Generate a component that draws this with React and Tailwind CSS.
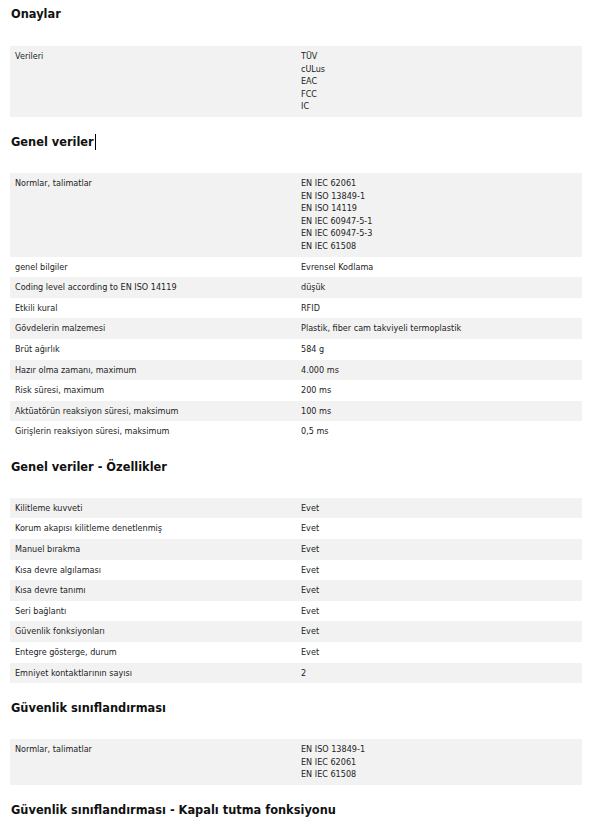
import React from 'react';

const sections = [
      {
            title: 'Onaylar',
            rows: [
                  ['Verileri', ['TÜV', 'cULus', 'EAC', 'FCC', 'IC']],
            ],
      },
      {
            title: 'Genel veriler',
            caret: true,
            rows: [
                  ['Normlar, talimatlar', ['EN IEC 62061', 'EN ISO 13849-1', 'EN ISO 14119', 'EN IEC 60947-5-1', 'EN IEC 60947-5-3', 'EN IEC 61508']],
                  ['genel bilgiler', ['Evrensel Kodlama']],
                  ['Coding level according to EN ISO 14119', ['düşük']],
                  ['Etkili kural', ['RFID']],
                  ['Gövdelerin malzemesi', ['Plastik, fiber cam takviyeli termoplastik']],
                  ['Brüt ağırlık', ['584 g']],
                  ['Hazır olma zamanı, maximum', ['4.000 ms']],
                  ['Risk süresi, maximum', ['200 ms']],
                  ['Aktüatörün reaksiyon süresi, maksimum', ['100 ms']],
                  ['Girişlerin reaksiyon süresi, maksimum', ['0,5 ms']],
            ],
      },
      {
            title: 'Genel veriler - Özellikler',
            rows: [
                  ['Kilitleme kuvveti', ['Evet']],
                  ['Korum akapısı kilitleme denetlenmiş', ['Evet']],
                  ['Manuel bırakma', ['Evet']],
                  ['Kısa devre algılaması', ['Evet']],
                  ['Kısa devre tanımı', ['Evet']],
                  ['Seri bağlantı', ['Evet']],
                  ['Güvenlik fonksiyonları', ['Evet']],
                  ['Entegre gösterge, durum', ['Evet']],
                  ['Emniyet kontaktlarının sayısı', ['2']],
            ],
      },
      {
            title: 'Güvenlik sınıflandırması',
            rows: [
                  ['Normlar, talimatlar', ['EN ISO 13849-1', 'EN IEC 62061', 'EN IEC 61508']],
            ],
      },
      {
            title: 'Güvenlik sınıflandırması - Kapalı tutma fonksiyonu',
            rows: [],
      },
]

const Section = ({ section, first }) => (
      <div>
            <h2 className={`${first ? 'mt-[6px] mb-[24px]' : 'mt-[17px] mb-[23px]'} ml-[11px] h-[16px] flex items-center text-[11.4px] font-bold text-[#111]`}>
                  {section.title}
                  {section.caret && <span className='inline-block w-px h-[16px] bg-black ml-[1px]'></span>}
            </h2>
            {section.rows.length > 0 &&
                  <div className='ml-[10px] w-[572px]'>
                        {section.rows.map((row, i) => (
                              <div key={i} className={`flex px-[5px] py-[4px] ${i % 2 === 0 ? 'bg-[#f2f2f2]' : 'bg-white'}`}>
                                    <div className='w-[286px] shrink-0'>{row[0]}</div>
                                    <div className='flex-1'>
                                          {row[1].map((v, j) => <div key={j}>{v}</div>)}
                                    </div>
                              </div>
                        ))}
                  </div>
            }
      </div>
)

const App = () => {
      return (
            <div className="bg-white min-h-[831px] text-[8.1px] leading-[12.6px] text-[#222]" style={{ fontFamily: '"DejaVu Sans", sans-serif' }}>
                  {sections.map((s, i) => <Section key={i} section={s} first={i === 0} />)}
            </div>
      );
};

export default App;
